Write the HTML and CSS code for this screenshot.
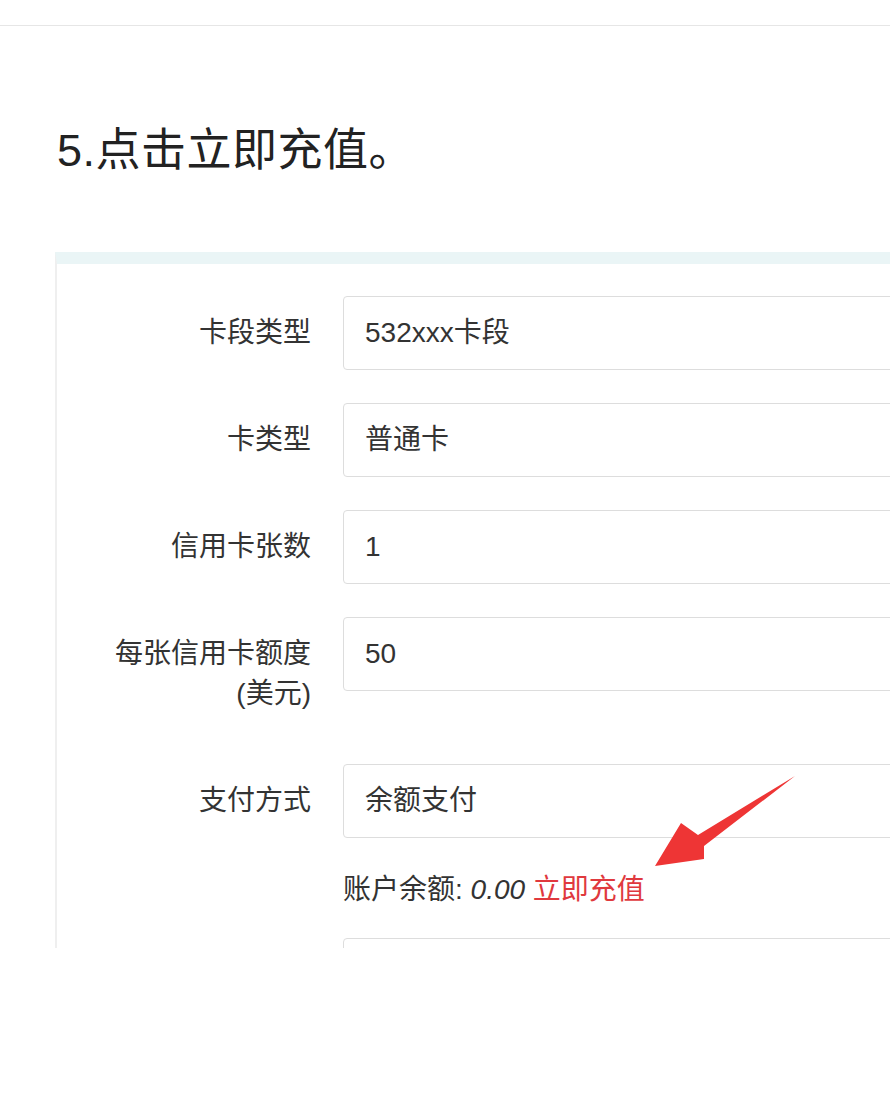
FILE: index.html
```html
<!DOCTYPE html>
<html lang="zh-CN">
<head>
<meta charset="utf-8">
<title>点击立即充值</title>
<link rel="stylesheet" href="styles.css">
</head>
<body>
<div class="topbar"></div>
<div class="article">
  <h1 class="title">5.点击立即充值。</h1>
</div>
<div class="figure">
  <div class="form">
    <div class="row">
      <div class="label">卡段类型</div>
      <div class="field">532xxx卡段</div>
    </div>
    <div class="row">
      <div class="label">卡类型</div>
      <div class="field">普通卡</div>
    </div>
    <div class="row">
      <div class="label">信用卡张数</div>
      <div class="field">1</div>
    </div>
    <div class="row">
      <div class="label">每张信用卡额度<br>(美元)</div>
      <div class="field">50</div>
    </div>
    <div class="row row-tight">
      <div class="label">支付方式</div>
      <div class="field">余额支付</div>
    </div>
    <div class="helper">账户余额: <em class="amount">0.00</em> <span class="recharge">立即充值</span></div>
    <div class="row">
      <div class="label"></div>
      <div class="field"></div>
    </div>
  </div>
  <svg class="arrow" width="160" height="110" viewBox="640 765 160 110" xmlns="http://www.w3.org/2000/svg">
    <polygon points="795,776 698,835 681,823 655,866 704,859 704,846" fill="#ee3535"/>
  </svg>
</div>
</body>
</html>
```
FILE: styles.css
```css
html, body {
  margin: 0;
  padding: 0;
  background: #ffffff;
}
body {
  font-family: "Liberation Sans", "Noto Sans CJK SC", sans-serif;
  color: #333333;
}
.topbar {
  height: 25px;
  border-bottom: 1px solid #e6e6e6;
}
.article {
  padding-left: 57px;
}
.title {
  margin: 95px 0 0 0;
  font-size: 45px;
  line-height: 60px;
  letter-spacing: 0.5px;
  font-weight: normal;
  color: #222222;
}
.figure {
  position: relative;
  margin: 71px 0 0 55px;
  height: 684px;
  overflow: hidden;
  border-left: 2px solid #efefef;
  border-top: 12px solid #eaf5f6;
}
.form {
  padding-top: 32px;
  font-size: 28px;
}
.row {
  display: flex;
  align-items: flex-start;
  gap: 32px;
  margin-bottom: 33px;
}
.row-tight {
  margin-bottom: 0;
}
.label {
  flex: 0 0 254px;
  text-align: right;
  padding: 17px 0;
  line-height: 40px;
  color: #333333;
}
.field {
  flex: 0 0 auto;
  width: 600px;
  height: 74px;
  box-sizing: border-box;
  border: 1px solid #dddddd;
  border-radius: 4px;
  padding: 0 21px;
  line-height: 72px;
  color: #333333;
  background: #ffffff;
}
.helper {
  margin: 32px 0 28px 286px;
  line-height: 40px;
  font-size: 28px;
  color: #333333;
}
.amount {
  font-style: italic;
}
.recharge {
  color: #e0393e;
}
.arrow {
  position: absolute;
  left: 583px;
  top: 501px;
}
```
